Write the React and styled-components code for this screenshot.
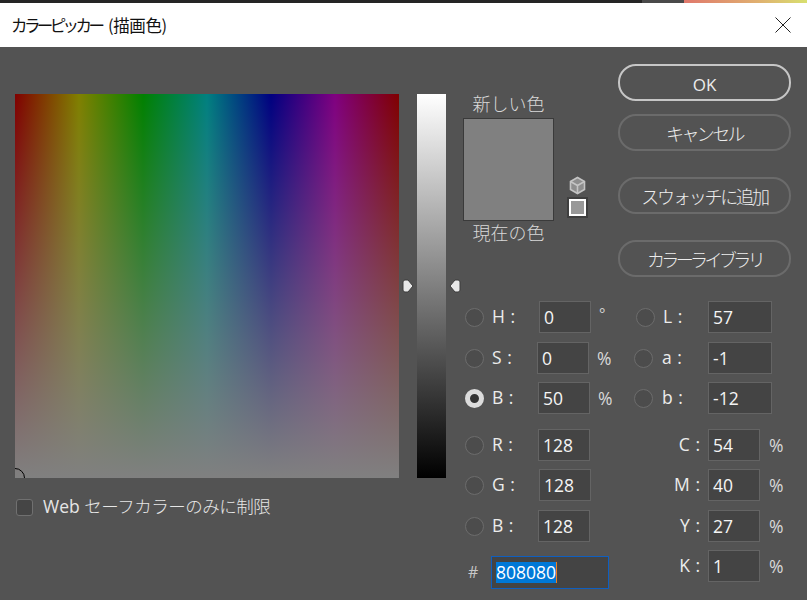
import React from "react";
import styled, { createGlobalStyle } from "styled-components";

const GlobalStyle = createGlobalStyle`
  html, body {
    margin: 0;
    padding: 0;
    background: #535353;
  }
  body {
    font-family: "Open Sans", "Noto Sans CJK JP", sans-serif;
  }
`;

const Page = styled.div`
  width: 807px;
  height: 600px;
  overflow: hidden;
  background: #535353;
`;

const TopStrip = styled.div`
  height: 3px;
  display: flex;
  background: #252525;
`;

const StripGrey = styled.div`
  margin-left: 642px;
  width: 42px;
  background: #4a4a4a;
`;

const StripColor = styled.div`
  flex: 1;
  background: linear-gradient(90deg, #e0786c, #e0b070 60%, #d8e070);
`;

const TitleBar = styled.div`
  height: 44px;
  background: #fff;
  display: flex;
  align-items: center;
  justify-content: space-between;
  padding: 0 16px 0 11px;
`;

const Title = styled.div`
  font-family: "Noto Sans CJK JP", sans-serif;
  font-size: 16.5px;
  color: #111;
  white-space: pre;
`;

const TitleKana = styled.span`
  letter-spacing: -3.6px;
  margin-right: 3px;
`;

const TitleRest = styled.span`
  letter-spacing: -0.4px;
`;

const Body = styled.div`
  display: flex;
  align-items: flex-start;
  padding: 17px 0 0 15px;
`;

const LeftColumn = styled.div`
  width: 384px;
  margin-top: 30px;
`;

const Field = styled.div`
  position: relative;
  width: 384px;
  height: 384px;
  overflow: hidden;
  background:
    linear-gradient(180deg, rgba(128, 128, 128, 0), #808080),
    linear-gradient(90deg, #800000, #808000 16.67%, #008000 33.33%, #008080 50%, #000080 66.67%, #800080 83.33%, #800000);
`;

const FieldMarker = styled.div`
  position: absolute;
  left: -10px;
  bottom: -10px;
  width: 20px;
  height: 20px;
  box-sizing: border-box;
  border: 1px solid #000;
  border-radius: 50%;
`;

const WebRow = styled.label`
  display: flex;
  align-items: center;
  margin: 20px 0 0 1px;
  height: 18px;
`;

const CheckBox = styled.span`
  width: 17px;
  height: 17px;
  box-sizing: border-box;
  border: 1px solid #707070;
  border-radius: 3px;
  background: #454545;
`;

const WebLabel = styled.span`
  margin: -3px 0 0 10px;
  font-size: 17.5px;
  color: #e6e6e6;
`;

const Thin = styled.span`
  font-family: "Noto Sans CJK JP", sans-serif;
  font-weight: 300;
  letter-spacing: -0.5px;
`;

const SliderWrap = styled.div`
  position: relative;
  width: 29px;
  height: 384px;
  margin: 30px 17px 0 18px;
`;

const SliderBar = styled.div`
  height: 100%;
  background: linear-gradient(180deg, #fff, #000);
`;

const Arrow = styled.svg`
  position: absolute;
  top: 185px;
  width: 12px;
  height: 14px;
  left: ${(p) => (p.$side === "left" ? "-15px" : "32px")};
`;

const RightColumn = styled.div`
  width: 344px;
`;

const TopBlock = styled.div`
  display: flex;
  align-items: flex-start;
  height: 237px;
`;

const Preview = styled.div`
  width: 91px;
  margin-top: 30px;
`;

const PreviewLabel = styled.div`
  font-family: "Noto Sans CJK JP", sans-serif;
  font-weight: 300;
  font-size: 18px;
  line-height: 24px;
  height: 24px;
  margin-top: ${(p) => (p.$raised ? "-3px" : "-1px")};
  margin-bottom: ${(p) => (p.$raised ? "3px" : "0")};
  color: #d8d8d8;
  text-align: center;
  white-space: nowrap;
`;

const Swatch = styled.div`
  height: 103px;
  box-sizing: border-box;
  border: 1px solid #3a3a3a;
  background: #808080;
`;

const Gamut = styled.div`
  width: 21px;
  margin: 112px 30px 0 13px;
  display: flex;
  flex-direction: column;
  align-items: center;
  gap: 2px;
`;

const WebSwatch = styled.div`
  width: 21px;
  height: 21px;
  box-sizing: border-box;
  border: 2px solid #3f3f3f;
  outline: 2px solid #fff;
  outline-offset: -4px;
  background: #999;
`;

const Buttons = styled.div`
  width: 173px;
  display: flex;
  flex-direction: column;
`;

const PillButton = styled.button`
  height: 37px;
  box-sizing: border-box;
  margin-top: ${(p) => p.$top}px;
  padding: 0;
  border: 2px solid ${(p) => (p.$primary ? "#c6c6c6" : "#6b6b6b")};
  border-radius: 18px;
  background: transparent;
  color: #ececec;
  font-family: "Noto Sans CJK JP", sans-serif;
  font-weight: 300;
  font-size: 18px;
  letter-spacing: ${(p) => p.$tight || 0}px;
  white-space: nowrap;
`;

const OkText = styled.span`
  font-family: "Open Sans", sans-serif;
  font-weight: 400;
  font-size: 17px;
`;

const Values = styled.div`
  display: flex;
  align-items: flex-start;
`;

const ValueColumn = styled.div`
  width: ${(p) => p.$width}px;
`;

const Row = styled.div`
  display: flex;
  align-items: center;
  height: 32px;
  margin-top: ${(p) => p.$top}px;
`;

const Radio = styled.span`
  flex: none;
  width: 19px;
  height: 19px;
  box-sizing: border-box;
  margin-left: ${(p) => p.$left}px;
  border-radius: 50%;
  border: ${(p) => (p.$on ? "5px solid #dcdcdc" : "1px solid #6c6c6c")};
  background: ${(p) => (p.$on ? "#333" : "#4c4c4c")};
`;

const Label = styled.span`
  flex: none;
  box-sizing: border-box;
  width: ${(p) => p.$width}px;
  margin-left: ${(p) => p.$left}px;
  padding-bottom: 2px;
  padding-right: ${(p) => (p.$right ? "8px" : "0")};
  font-size: 17.5px;
  word-spacing: 1px;
  color: #ececec;
  white-space: pre;
  text-align: ${(p) => (p.$right ? "right" : "left")};
`;

const Input = styled.div`
  flex: none;
  width: ${(p) => p.$width}px;
  height: 32px;
  box-sizing: border-box;
  padding-left: 4px;
  border: 1px solid #646464;
  background: #444;
  color: #f4f4f4;
  font-size: 17.5px;
  line-height: 30px;
`;

const Unit = styled.span`
  margin-left: ${(p) => p.$left}px;
  font-size: 17.5px;
  color: #d8d8d8;
`;

const Degree = styled(Unit)`
  margin-top: -8px;
  font-size: 15px;
`;

const Hash = styled.span`
  flex: none;
  width: 23px;
  margin-left: 5px;
  font-size: 16px;
  color: #c8c8c8;
`;

const HexInput = styled.div`
  flex: none;
  width: 118px;
  height: 33px;
  box-sizing: border-box;
  padding-left: 4px;
  display: flex;
  align-items: center;
  border: 1px solid #0f5fc0;
  background: #444;
`;

const Selected = styled.span`
  height: 21px;
  line-height: 21px;
  background: #0078d7;
  color: #fff;
  font-size: 17.5px;
  border-right: 1px solid #f08020;
`;

const CloseIcon = () => (
  <svg width="16" height="16" viewBox="0 0 16 16">
    <path d="M.5.5l15 15M15.500.5l-15 15" stroke="#222" strokeWidth="1" fill="none" />
  </svg>
);

const CubeIcon = () => (
  <svg width="19" height="19" viewBox="0 0 19 19">
    <path d="M9.500 1.500l7 4v8l-7 4-7-4v-8z" fill="#8e8e8e" stroke="#c4c4c4" strokeWidth="1.600" />
    <path d="M2.500 5.500l7 4 7-4M9.500 9.500v8" fill="none" stroke="#c4c4c4" strokeWidth="1.600" />
  </svg>
);

const SliderArrow = ({ side }) => (
  <Arrow $side={side} viewBox="0 0 12 14">
    <path
      d={side === "left" ? "M1 3q0-2 2-2h3l5 6-5 6H3q-2 0-2-2z" : "M11 3q0-2-2-2H6L1 7l5 6h3q2 0 2-2z"}
      fill="#e8e8e8"
      stroke="#3c3c3c"
      strokeWidth="1"
    />
  </Arrow>
);

const App = () => {
  return (
    <Page>
      <GlobalStyle />
      <TopStrip>
        <StripGrey />
        <StripColor />
      </TopStrip>
      <TitleBar>
        <Title>
          <TitleKana>カラーピッカー</TitleKana> <TitleRest>(描画色)</TitleRest>
        </Title>
        <CloseIcon />
      </TitleBar>
      <Body>
        <LeftColumn>
          <Field>
            <FieldMarker />
          </Field>
          <WebRow>
            <CheckBox />
            <WebLabel>
              Web <Thin>セーフカラーのみに制限</Thin>
            </WebLabel>
          </WebRow>
        </LeftColumn>
        <SliderWrap>
          <SliderBar />
          <SliderArrow side="left" />
          <SliderArrow side="right" />
        </SliderWrap>
        <RightColumn>
          <TopBlock>
            <Preview>
              <PreviewLabel $raised>新しい色</PreviewLabel>
              <Swatch />
              <PreviewLabel>現在の色</PreviewLabel>
            </Preview>
            <Gamut>
              <CubeIcon />
              <WebSwatch />
            </Gamut>
            <Buttons>
              <PillButton $primary $top={0}>
                <OkText>OK</OkText>
              </PillButton>
              <PillButton $top={13} $tight={-2.6}>キャンセル</PillButton>
              <PillButton $top={26} $tight={-2.2}>スウォッチに追加</PillButton>
              <PillButton $top={26} $tight={-3.6}>カラーライブラリ</PillButton>
            </Buttons>
          </TopBlock>
          <Values>
            <ValueColumn $width={171}>
              <Row $top={0}>
                <Radio $left={2} />
                <Label $left={8} $width={47}>H :</Label>
                <Input $width={52}>0</Input>
                <Degree $left={8}>°</Degree>
              </Row>
              <Row $top={9}>
                <Radio $left={2} />
                <Label $left={8} $width={45}>S :</Label>
                <Input $width={52}>0</Input>
                <Unit $left={8}>%</Unit>
              </Row>
              <Row $top={8}>
                <Radio $left={2} $on />
                <Label $left={8} $width={46}>B :</Label>
                <Input $width={52}>50</Input>
                <Unit $left={8}>%</Unit>
              </Row>
              <Row $top={15}>
                <Radio $left={2} />
                <Label $left={8} $width={46}>R :</Label>
                <Input $width={52}>128</Input>
              </Row>
              <Row $top={8}>
                <Radio $left={2} />
                <Label $left={8} $width={47}>G :</Label>
                <Input $width={52}>128</Input>
              </Row>
              <Row $top={9}>
                <Radio $left={2} />
                <Label $left={8} $width={46}>B :</Label>
                <Input $width={52}>128</Input>
              </Row>
              <Row $top={14}>
                <Hash>#</Hash>
                <HexInput>
                  <Selected>808080</Selected>
                </HexInput>
              </Row>
            </ValueColumn>
            <ValueColumn $width={173}>
              <Row $top={0}>
                <Radio $left={2} />
                <Label $left={8} $width={45}>L :</Label>
                <Input $width={64}>57</Input>
              </Row>
              <Row $top={9}>
                <Radio $left={0} />
                <Label $left={9} $width={46}>a :</Label>
                <Input $width={64}>-1</Input>
              </Row>
              <Row $top={8}>
                <Radio $left={0} />
                <Label $left={9} $width={46}>b :</Label>
                <Input $width={64}>-12</Input>
              </Row>
              <Row $top={15}>
                <Label $left={0} $width={74} $right>C :</Label>
                <Input $width={52}>54</Input>
                <Unit $left={9}>%</Unit>
              </Row>
              <Row $top={8}>
                <Label $left={0} $width={74} $right>M :</Label>
                <Input $width={52}>40</Input>
                <Unit $left={9}>%</Unit>
              </Row>
              <Row $top={9}>
                <Label $left={0} $width={74} $right>Y :</Label>
                <Input $width={52}>27</Input>
                <Unit $left={9}>%</Unit>
              </Row>
              <Row $top={8}>
                <Label $left={0} $width={74} $right>K :</Label>
                <Input $width={52}>1</Input>
                <Unit $left={9}>%</Unit>
              </Row>
            </ValueColumn>
          </Values>
        </RightColumn>
      </Body>
    </Page>
  );
};

export default App;
